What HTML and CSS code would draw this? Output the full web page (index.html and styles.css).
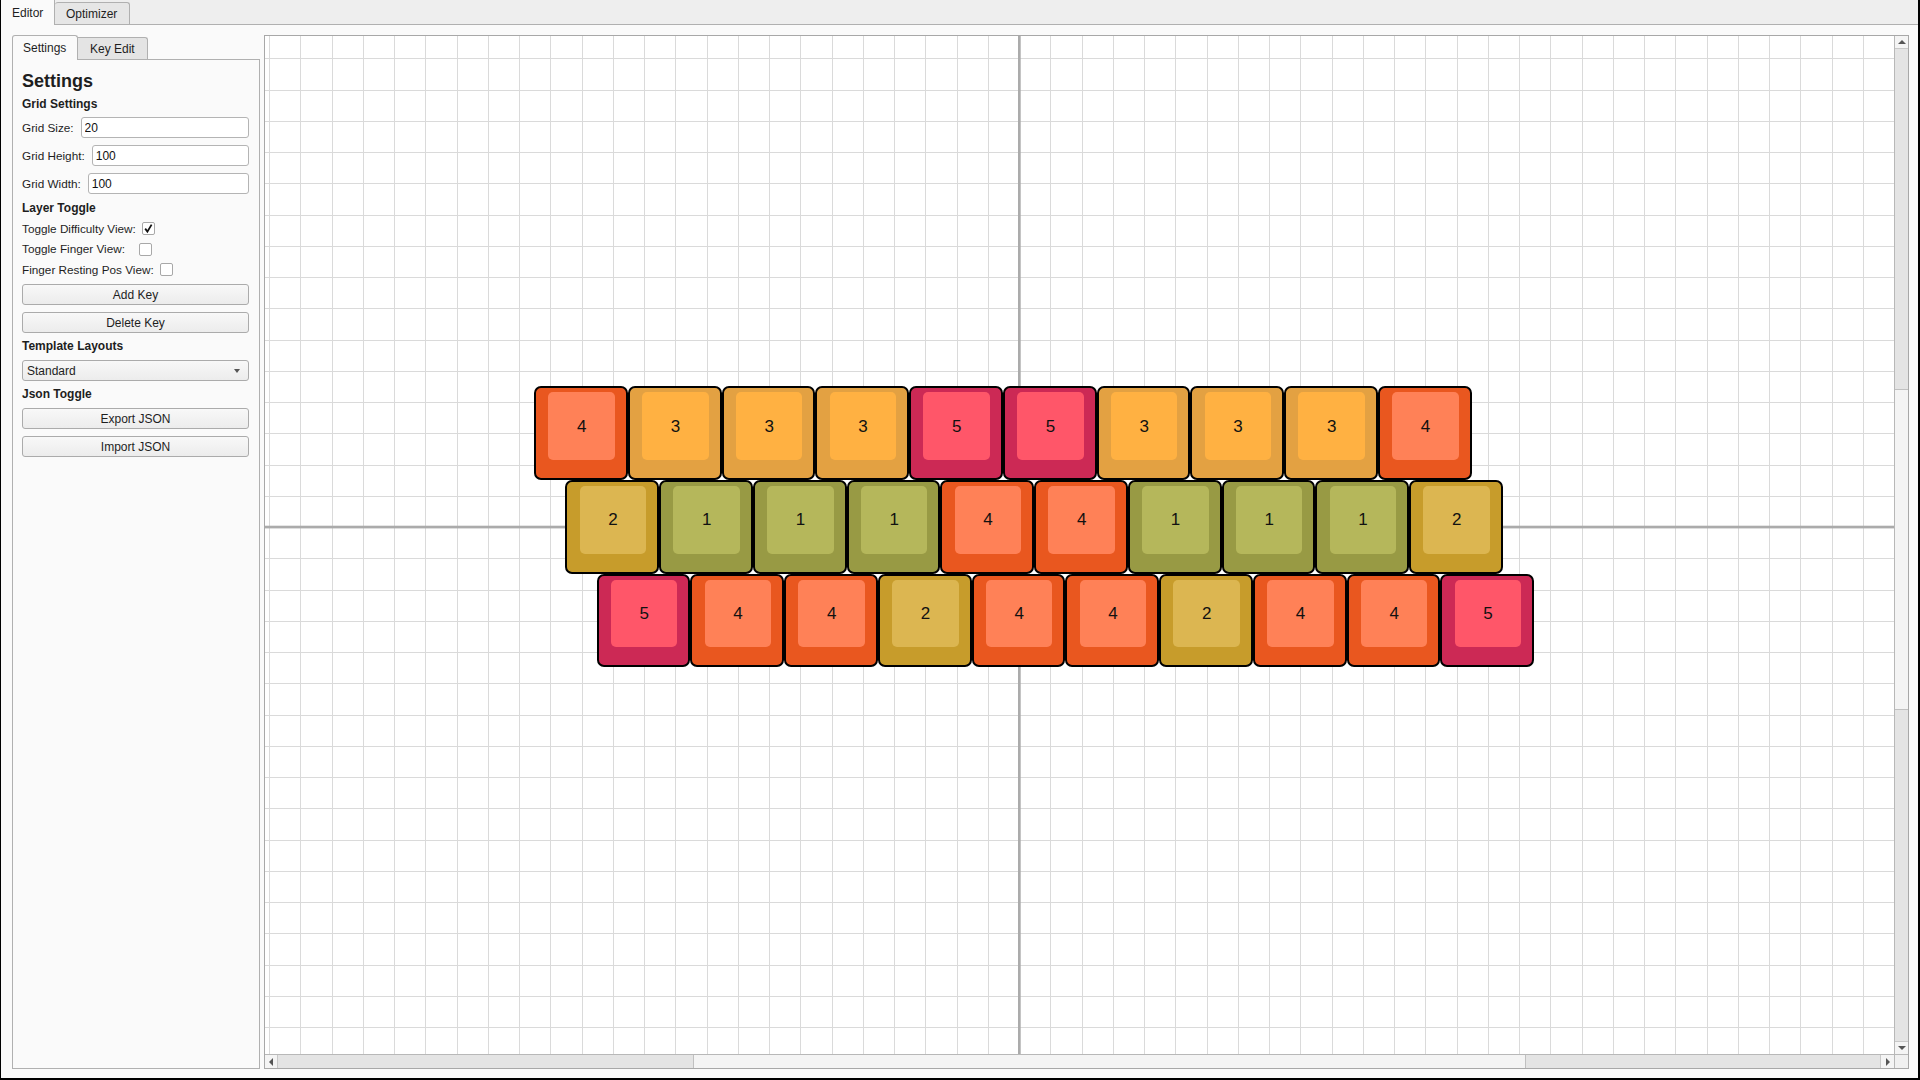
FILE: index.html
```html
<!DOCTYPE html>
<html>
<head>
<meta charset="utf-8">
<title>Keyboard Editor</title>
<link rel="stylesheet" href="styles.css">
</head>
<body>
<div class="window">
  <div class="top-tabs">
    <div class="ttab ttab-active">Editor</div>
    <div class="ttab">Optimizer</div>
  </div>
  <div class="main">
    <div class="side">
      <div class="side-tabs">
        <div class="stab stab-active">Settings</div>
        <div class="stab">Key Edit</div>
      </div>
      <div class="panel">
        <div class="title">Settings</div>
        <div class="sec sec-first">Grid Settings</div>
        <div class="field"><span class="lbl">Grid Size:</span><input class="inp" type="text" value="20"></div>
        <div class="field"><span class="lbl">Grid Height:</span><input class="inp" type="text" value="100"></div>
        <div class="field"><span class="lbl">Grid Width:</span><input class="inp" type="text" value="100"></div>
        <div class="sec">Layer Toggle</div>
        <div class="check"><span class="lbl">Toggle Difficulty View:</span><span class="box"><svg width="11" height="11" viewBox="0 0 11 11"><path d="M2.2 5.6 L4.4 8.6 L8.6 1.6" fill="none" stroke="#111" stroke-width="1.8"/></svg></span></div>
        <div class="check check-wide"><span class="lbl">Toggle Finger View:</span><span class="box"></span></div>
        <div class="check"><span class="lbl">Finger Resting Pos View:</span><span class="box"></span></div>
        <div class="btn">Add Key</div>
        <div class="btn">Delete Key</div>
        <div class="sec">Template Layouts</div>
        <div class="combo"><span>Standard</span><span class="arrow"></span></div>
        <div class="sec">Json Toggle</div>
        <div class="btn">Export JSON</div>
        <div class="btn">Import JSON</div>
      </div>
    </div>
    <div class="canvas">
      <div class="viewport">
        <svg class="grid" width="1629" height="1018" viewBox="0 0 1629 1018">
          <path shape-rendering="crispEdges" stroke="#dadada" stroke-width="1" fill="none" d="M4.5 0V1018M35.5 0V1018M67.5 0V1018M98.5 0V1018M129.5 0V1018M160.5 0V1018M192.5 0V1018M223.5 0V1018M254.5 0V1018M285.5 0V1018M317.5 0V1018M348.5 0V1018M379.5 0V1018M410.5 0V1018M442.5 0V1018M473.5 0V1018M504.5 0V1018M535.5 0V1018M567.5 0V1018M598.5 0V1018M629.5 0V1018M660.5 0V1018M692.5 0V1018M723.5 0V1018M785.5 0V1018M817.5 0V1018M848.5 0V1018M879.5 0V1018M910.5 0V1018M942.5 0V1018M973.5 0V1018M1004.5 0V1018M1035.5 0V1018M1067.5 0V1018M1098.5 0V1018M1129.5 0V1018M1160.5 0V1018M1192.5 0V1018M1223.5 0V1018M1254.5 0V1018M1285.5 0V1018M1317.5 0V1018M1348.5 0V1018M1379.5 0V1018M1410.5 0V1018M1442.5 0V1018M1473.5 0V1018M1504.5 0V1018M1535.5 0V1018M1567.5 0V1018M1598.5 0V1018M0 22.5H1629M0 54.5H1629M0 85.5H1629M0 116.5H1629M0 147.5H1629M0 179.5H1629M0 210.5H1629M0 241.5H1629M0 272.5H1629M0 304.5H1629M0 335.5H1629M0 366.5H1629M0 397.5H1629M0 429.5H1629M0 460.5H1629M0 522.5H1629M0 554.5H1629M0 585.5H1629M0 616.5H1629M0 647.5H1629M0 679.5H1629M0 710.5H1629M0 741.5H1629M0 772.5H1629M0 804.5H1629M0 835.5H1629M0 866.5H1629M0 897.5H1629M0 929.5H1629M0 960.5H1629M0 991.5H1629"/>
          <rect x="753" y="0" width="2.7" height="1018" fill="#ababab"/>
          <rect x="0" y="489.7" width="1629" height="2.7" fill="#ababab"/>
        </svg>
        <div class="keyboard">
          <div class="krow">
            <div class="key d4"><div class="cap">4</div></div>
            <div class="key d3"><div class="cap">3</div></div>
            <div class="key d3"><div class="cap">3</div></div>
            <div class="key d3"><div class="cap">3</div></div>
            <div class="key d5"><div class="cap">5</div></div>
            <div class="key d5"><div class="cap">5</div></div>
            <div class="key d3"><div class="cap">3</div></div>
            <div class="key d3"><div class="cap">3</div></div>
            <div class="key d3"><div class="cap">3</div></div>
            <div class="key d4"><div class="cap">4</div></div>
          </div>
          <div class="krow krow-2">
            <div class="key d2"><div class="cap">2</div></div>
            <div class="key d1"><div class="cap">1</div></div>
            <div class="key d1"><div class="cap">1</div></div>
            <div class="key d1"><div class="cap">1</div></div>
            <div class="key d4"><div class="cap">4</div></div>
            <div class="key d4"><div class="cap">4</div></div>
            <div class="key d1"><div class="cap">1</div></div>
            <div class="key d1"><div class="cap">1</div></div>
            <div class="key d1"><div class="cap">1</div></div>
            <div class="key d2"><div class="cap">2</div></div>
          </div>
          <div class="krow krow-3">
            <div class="key d5"><div class="cap">5</div></div>
            <div class="key d4"><div class="cap">4</div></div>
            <div class="key d4"><div class="cap">4</div></div>
            <div class="key d2"><div class="cap">2</div></div>
            <div class="key d4"><div class="cap">4</div></div>
            <div class="key d4"><div class="cap">4</div></div>
            <div class="key d2"><div class="cap">2</div></div>
            <div class="key d4"><div class="cap">4</div></div>
            <div class="key d4"><div class="cap">4</div></div>
            <div class="key d5"><div class="cap">5</div></div>
          </div>
        </div>
      </div>
      <div class="vscroll">
        <div class="sbtn sbtn-v"><span class="tri tri-up"></span></div>
        <div class="vtrack"><div class="vthumb"></div></div>
        <div class="sbtn sbtn-v sbtn-vb"><span class="tri tri-down"></span></div>
      </div>
      <div class="hscroll">
        <div class="sbtn sbtn-h"><span class="tri tri-left"></span></div>
        <div class="htrack"><div class="hthumb"></div></div>
        <div class="sbtn sbtn-h sbtn-hr"><span class="tri tri-right"></span></div>
      </div>
      <div class="corner"></div>
    </div>
  </div>
</div>
</body>
</html>
```

FILE: styles.css
```css
* { box-sizing: border-box; }
html, body { margin: 0; padding: 0; }
body {
  font-family: "Liberation Sans", Arial, sans-serif;
  font-size: 12px;
  color: #1e1e1e;
  background: #000;
}
.window {
  width: 1920px;
  height: 1080px;
  border-left: 1px solid #000;
  border-right: 2px solid #000;
  border-bottom: 2px solid #000;
  background: #fafafa;
  display: flex;
  flex-direction: column;
  overflow: hidden;
}
.top-tabs {
  height: 25px;
  flex: none;
  display: flex;
  align-items: flex-end;
  background: #eeeeee;
  box-shadow: inset 0 -1px 0 #b0b0b0;
}
.ttab {
  height: 22px;
  line-height: 23px;
  padding: 0 12px 0 11px;
  background: #e6e6e6;
  border-top: 1px solid #b0b0b0;
  border-right: 1px solid #b0b0b0;
  border-top-right-radius: 3px;
  border-top-left-radius: 3px;
  margin-bottom: 1px;
}
.ttab-active {
  height: 25px;
  line-height: 26px;
  margin-bottom: 0;
  background: #fafafa;
  border-top: none;
  border-radius: 0;
  width: 54px;
}
.main {
  flex: 1;
  display: flex;
  gap: 4px;
  padding: 10px 9px 9px 11px;
  min-height: 0;
}
.side {
  width: 248px;
  flex: none;
  display: flex;
  flex-direction: column;
}
.side-tabs {
  height: 24px;
  flex: none;
  display: flex;
  align-items: flex-start;
}
.stab {
  height: 22px;
  margin-top: 2px;
  line-height: 23px;
  padding: 0 12px 0 12px;
  background: #e4e4e4;
  border-top: 1px solid #b0b0b0;
  border-right: 1px solid #b0b0b0;
  border-top-right-radius: 3px;
}
.stab-active {
  position: relative;
  z-index: 1;
  margin-top: 0;
  height: 25px;
  line-height: 24px;
  width: 66px;
  padding: 0 0 0 10px;
  background: #fafafa;
  border: 1px solid #b0b0b0;
  border-bottom: none;
  border-radius: 3px 3px 0 0;
}
.panel {
  flex: 1;
  border: 1px solid #b0b0b0;
  background: #fafafa;
  padding: 11px 10px 0 9px;
  display: flex;
  flex-direction: column;
}
.title {
  font-size: 18px;
  font-weight: bold;
  line-height: 21px;
  height: 21px;
}
.sec {
  font-weight: bold;
  line-height: 16px;
  height: 16px;
  margin-top: 5px;
}
.sec-first { margin-top: 4px; }
.field {
  height: 21px;
  display: flex;
  align-items: center;
  gap: 7px;
  margin-top: 7px;
}
.sec + .field { margin-top: 5px; }
.lbl { line-height: 16px; white-space: nowrap; font-size: 11.75px; }
.inp {
  flex: 1;
  min-width: 0;
  height: 21px;
  border: 1px solid #b4b4b4;
  border-radius: 3px;
  background: #fff;
  font-family: inherit;
  font-size: 12px;
  color: #111;
  padding: 0 0 0 3px;
  margin: 0;
  outline: none;
}
.check {
  height: 16px;
  display: flex;
  align-items: center;
  gap: 6.5px;
  margin-top: 4.7px;
}
.sec + .check { margin-top: 5px; }
.check-wide { gap: 14px; }
.box {
  width: 13px;
  height: 13px;
  border: 1px solid #a8a8a8;
  border-radius: 2px;
  background: #fff;
  display: flex;
  align-items: center;
  justify-content: center;
}
.box svg { display: block; }
.btn, .combo {
  height: 21px;
  border: 1px solid #ababab;
  border-radius: 3px;
  background: linear-gradient(#f8f8f8, #ececec);
  line-height: 20px;
  text-align: center;
  margin-top: 7px;
}
.check + .btn { margin-top: 6.4px; }
.sec + .btn, .sec + .combo { margin-top: 6.5px; }
.btn + .sec, .combo + .sec { margin-top: 4.5px; }
.field + .sec { margin-top: 5.5px; }
.combo {
  display: flex;
  justify-content: space-between;
  align-items: center;
  text-align: left;
  padding: 0 8px 0 4px;
}
.arrow {
  width: 0;
  height: 0;
  border-left: 3.5px solid transparent;
  border-right: 3.5px solid transparent;
  border-top: 4px solid #555;
}
.canvas {
  flex: 1;
  border: 1px solid #a8a8a8;
  display: grid;
  grid-template-columns: 1fr 14px;
  grid-template-rows: 1fr 14px;
  background: #fff;
  min-width: 0;
}
.viewport {
  position: relative;
  overflow: hidden;
  background: #fff;
}
.grid {
  position: absolute;
  left: 0;
  top: 0;
  display: block;
}
.keyboard {
  position: absolute;
  left: 269px;
  top: 350px;
  display: flex;
  flex-direction: column;
}
.krow { display: flex; }
.krow-2 { margin-left: 31.25px; }
.krow-3 { margin-left: 62.5px; }
.key {
  position: relative;
  width: 93.75px;
  height: 93.75px;
  border: 2.6px solid #000;
  border-radius: 7px;
}
.cap {
  position: absolute;
  left: 12.4px;
  top: 4.4px;
  width: 66.5px;
  height: 67.5px;
  border-radius: 5px;
  display: flex;
  align-items: center;
  justify-content: center;
  font-size: 17px;
  padding-top: 1px;
  color: #111;
}
.d1 { background: #989a44; }
.d1 .cap { background: #b5b75b; }
.d2 { background: #c79c2b; }
.d2 .cap { background: #dcb651; }
.d3 { background: #e3a142; }
.d3 .cap { background: #ffb142; }
.d4 { background: #e9571f; }
.d4 .cap { background: #ff8157; }
.d5 { background: #cc2955; }
.d5 .cap { background: #ff5669; }

.vscroll {
  display: flex;
  flex-direction: column;
  border-left: 1px solid #b8b8b8;
  background: #e4e4e4;
}
.hscroll {
  display: flex;
  border-top: 1px solid #b8b8b8;
  background: #e4e4e4;
}
.sbtn {
  flex: none;
  background: #f4f4f4;
  display: flex;
  align-items: center;
  justify-content: center;
}
.sbtn-v { height: 13px; border-bottom: 1px solid #c8c8c8; }
.sbtn-vb { border-bottom: none; border-top: 1px solid #c8c8c8; }
.sbtn-h { width: 13px; border-right: 1px solid #c8c8c8; }
.sbtn-hr { border-right: none; border-left: 1px solid #c8c8c8; width: 14px; }
.vtrack { flex: 1; display: flex; flex-direction: column; }
.vthumb {
  margin-top: 340px;
  height: 321px;
  background: #f4f4f4;
  border-top: 1px solid #c0c0c0;
  border-bottom: 1px solid #c0c0c0;
}
.htrack { flex: 1; display: flex; }
.hthumb {
  margin-left: 415px;
  width: 833px;
  background: #f4f4f4;
  border-left: 1px solid #c0c0c0;
  border-right: 1px solid #c0c0c0;
}
.corner {
  background: #f0f0f0;
  border-top: 1px solid #b8b8b8;
  border-left: 1px solid #b8b8b8;
}
.tri { width: 0; height: 0; }
.tri-up { border-left: 4px solid transparent; border-right: 4px solid transparent; border-bottom: 4px solid #555; }
.tri-down { border-left: 4px solid transparent; border-right: 4px solid transparent; border-top: 4px solid #555; }
.tri-left { border-top: 4px solid transparent; border-bottom: 4px solid transparent; border-right: 4px solid #555; }
.tri-right { border-top: 4px solid transparent; border-bottom: 4px solid transparent; border-left: 4px solid #555; }
```
